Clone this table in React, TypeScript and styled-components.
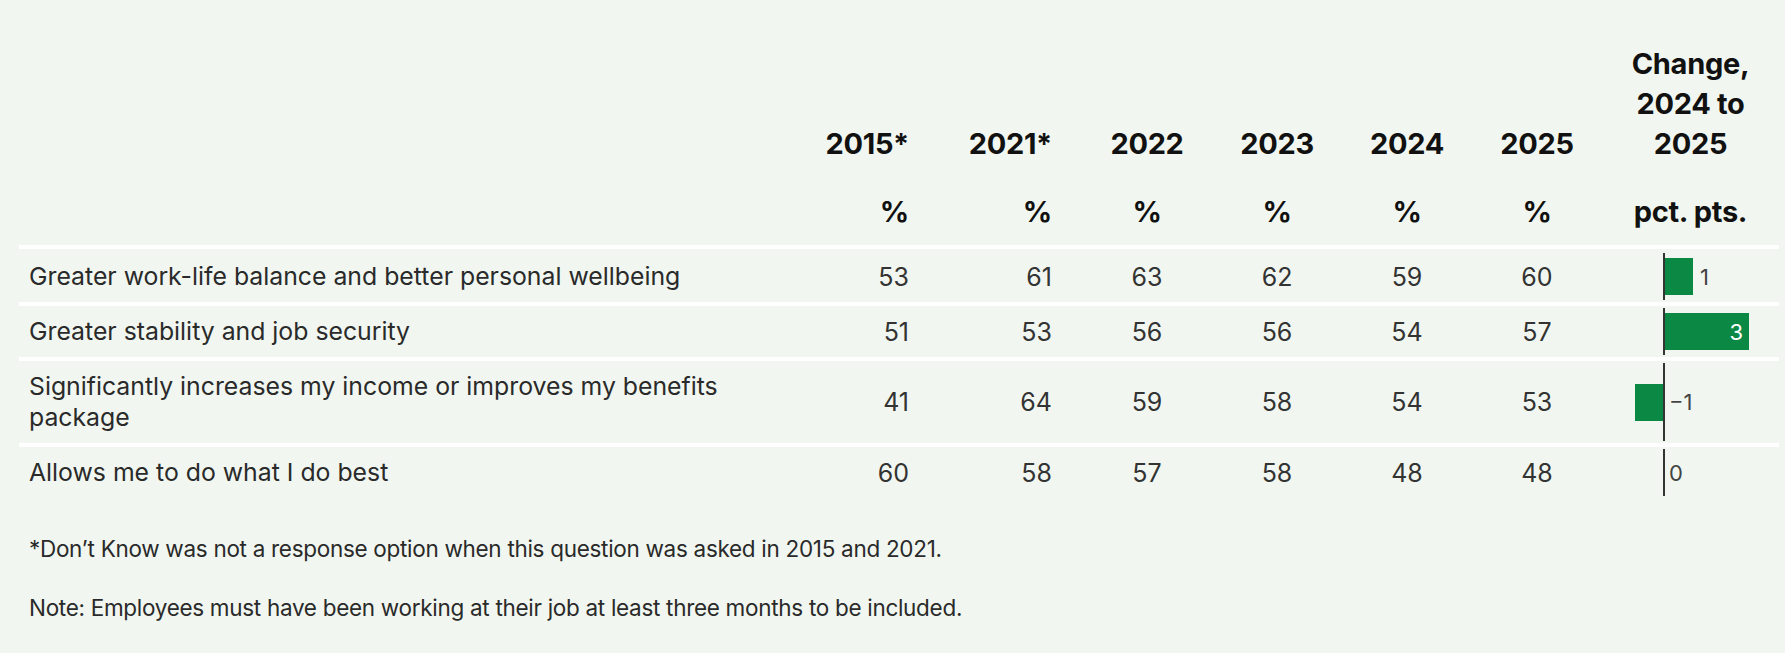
import React from "react";
import styled, { createGlobalStyle } from "styled-components";

const GlobalStyle = createGlobalStyle`
  html, body {
    margin: 0;
    padding: 0;
    background: #f1f7f0;
  }
  body {
    font-family: Inter, "Liberation Sans", sans-serif;
    color: #262626;
  }
`;

type Column = {
  label: string;
  align: "right" | "center";
  pad: number;
};

const columns: Column[] = [
  { label: "2015*", align: "right", pad: 31 },
  { label: "2021*", align: "right", pad: 30 },
  { label: "2022", align: "center", pad: 0 },
  { label: "2023", align: "center", pad: 0 },
  { label: "2024", align: "center", pad: 0 },
  { label: "2025", align: "center", pad: 0 },
];

const rows = [
  {
    label: "Greater work-life balance and better personal wellbeing",
    values: [53, 61, 63, 62, 59, 60],
    change: 1,
  },
  {
    label: "Greater stability and job security",
    values: [51, 53, 56, 56, 54, 57],
    change: 3,
  },
  {
    label: "Significantly increases my income or improves my benefits package",
    values: [41, 64, 59, 58, 54, 53],
    change: -1,
  },
  {
    label: "Allows me to do what I do best",
    values: [60, 58, 57, 58, 48, 48],
    change: 0,
  },
];

const UNIT = 28; // px per pct. pt.

const App: React.FC = (): React.ReactElement => {
  return (
    <Page>
      <GlobalStyle />
      <HeadRow>
        <span />
        {columns.map((c) => (
          <HeadCell key={c.label} $align={c.align} $pad={c.pad}>
            {c.label}
          </HeadCell>
        ))}
        <HeadCell $align="center" $pad={0} $tall>
          Change,
          <br />
          2024 to
          <br />
          2025
        </HeadCell>
      </HeadRow>
      <UnitRow>
        <span />
        {columns.map((c) => (
          <HeadCell key={c.label} $align={c.align} $pad={c.pad}>
            %
          </HeadCell>
        ))}
        <HeadCell $align="center" $pad={0}>
          pct. pts.
        </HeadCell>
      </UnitRow>
      <Body>
        {rows.map((r) => {
          const w = Math.abs(r.change) * UNIT;
          const inside = r.change > 0 && w >= 50;
          return (
            <Row key={r.label}>
              <Label>{r.label}</Label>
              {r.values.map((v, i) => (
                <Value key={i} $align={columns[i].align} $pad={columns[i].pad}>
                  {v}
                </Value>
              ))}
              <ChangeCell>
                <NegSide>{r.change < 0 && <Bar $w={w} />}</NegSide>
                <PosSide>
                  {r.change > 0 && (
                    <Bar $w={w} $inside={inside}>
                      {inside && r.change}
                    </Bar>
                  )}
                  {!inside && (
                    <BarLabel $gap={r.change > 0 ? 7 : 4}>
                      {r.change < 0 ? `\u2212${-r.change}` : r.change}
                    </BarLabel>
                  )}
                </PosSide>
              </ChangeCell>
            </Row>
          );
        })}
      </Body>
      <Notes>
        <Note>*Don’t Know was not a response option when this question was asked in 2015 and 2021.</Note>
        <Note>Note: Employees must have been working at their job at least three months to be included.</Note>
      </Notes>
    </Page>
  );
};

export default App;

const GRID = "781px 140px 142px 130px 130px 130px 130px 177px";

const Page = styled.div`
  width: 1760px;
  padding: 44px 0 0 19px;
`;

const HeadRow = styled.div`
  display: grid;
  grid-template-columns: ${GRID};
  align-items: end;
`;

const UnitRow = styled(HeadRow)`
  margin-top: 30px;
`;

const HeadCell = styled.div<{ $align: "right" | "center"; $pad: number; $tall?: boolean }>`
  font-weight: 700;
  font-size: 29px;
  line-height: ${(p) => (p.$tall ? 40 : 38)}px;
  margin-bottom: ${(p) => (p.$tall ? -1 : 0)}px;
  color: #111;
  letter-spacing: -0.3px;
  text-align: ${(p) => p.$align};
  padding-right: ${(p) => p.$pad}px;
`;

const Body = styled.div`
  margin-top: 14px;
`;

const Row = styled.div`
  display: grid;
  grid-template-columns: ${GRID};
  border-top: 4px solid #ffffff;

  &:first-child {
    padding-top: 2px;
  }
`;

const Label = styled.div`
  padding: 10px 50px 10px 10px;
  font-size: 24.8px;
  line-height: 31px;
  letter-spacing: 0;
  color: #2a2a2a;
`;

const Value = styled.div<{ $align: "right" | "center"; $pad: number }>`
  display: flex;
  align-items: center;
  justify-content: ${(p) => (p.$align === "right" ? "flex-end" : "center")};
  padding-right: ${(p) => p.$pad}px;
  font-size: 25px;
  color: #333;
`;

const ChangeCell = styled.div`
  display: flex;
  padding: 2px 0;
`;

const NegSide = styled.div`
  width: 61px;
  display: flex;
  justify-content: flex-end;
  align-items: center;
`;

const PosSide = styled.div`
  flex: 1;
  display: flex;
  align-items: center;
  border-left: 2px solid #333;
`;

const Bar = styled.div<{ $w: number; $inside?: boolean }>`
  width: ${(p) => p.$w}px;
  height: 37px;
  background: #0b8843;
  display: flex;
  align-items: center;
  justify-content: flex-end;
  box-sizing: border-box;
  padding-right: ${(p) => (p.$inside ? 6 : 0)}px;
  font-size: 22px;
  color: #fff;
`;

const BarLabel = styled.span<{ $gap: number }>`
  margin-left: ${(p) => p.$gap}px;
  font-size: 22px;
  color: #444;
`;

const Notes = styled.div`
  margin-top: 35px;
  padding-left: 10px;
`;

const Note = styled.p`
  margin: 0 0 28px;
  font-size: 22.5px;
  line-height: 31px;
  letter-spacing: -0.3px;
  color: #2a2a2a;
`;
